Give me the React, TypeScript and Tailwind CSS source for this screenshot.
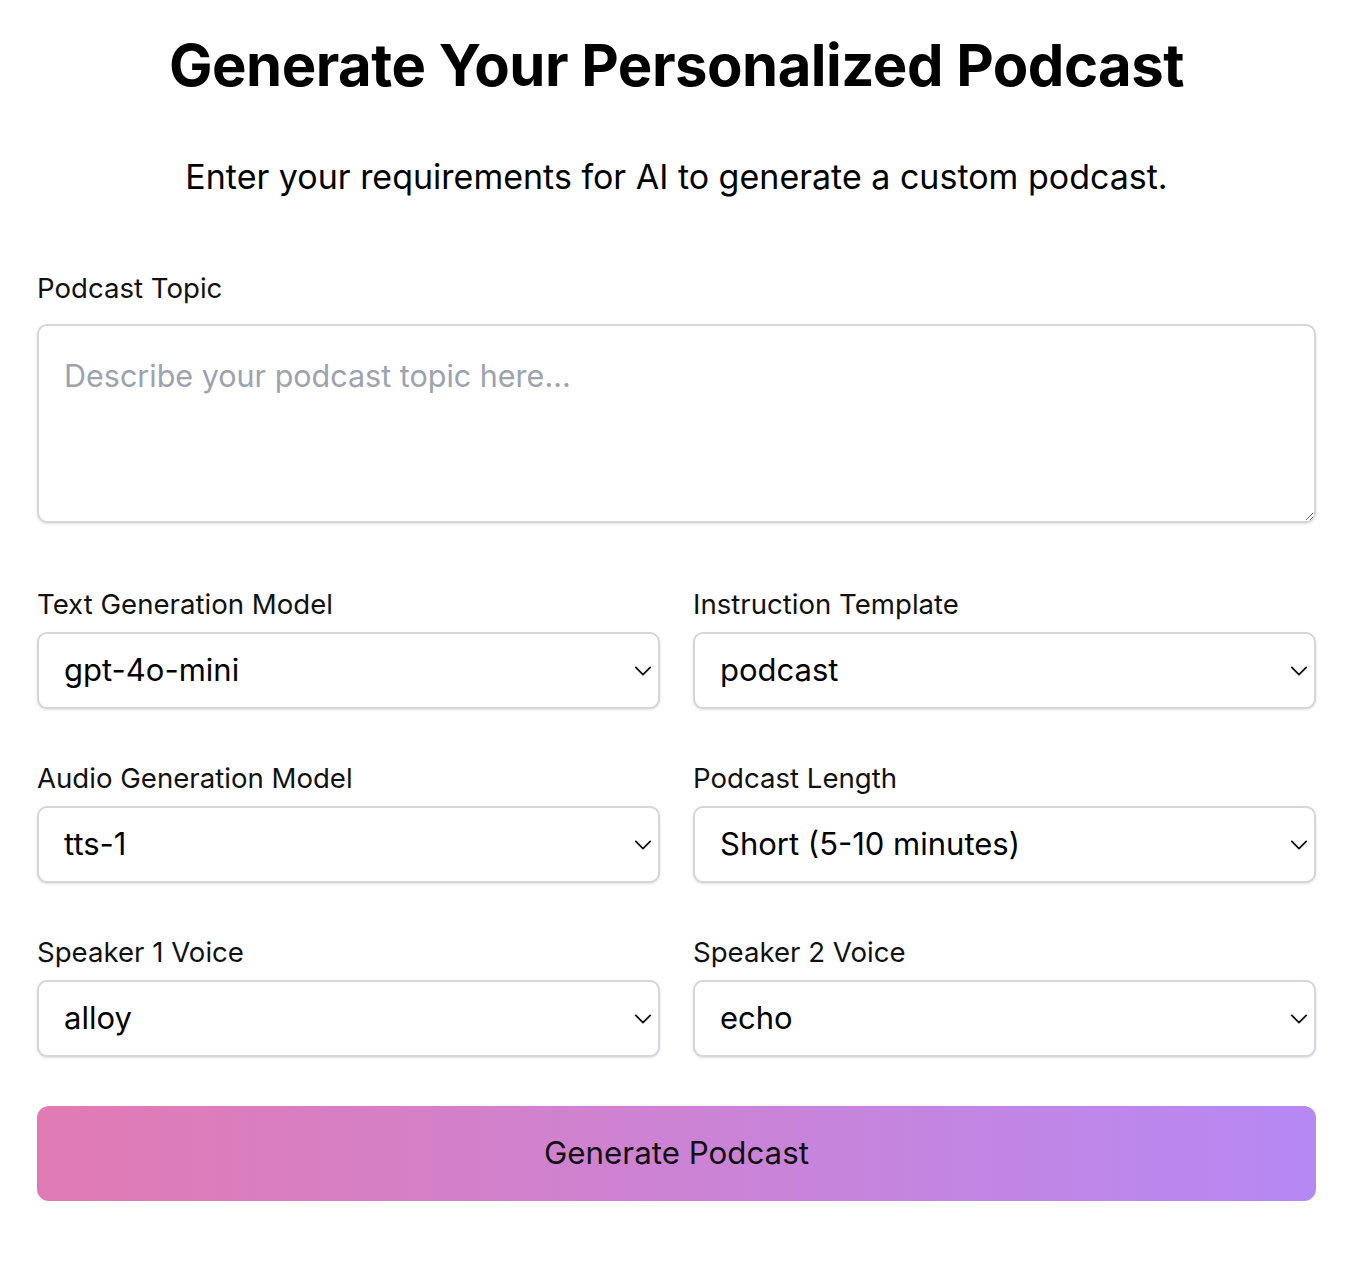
import React from "react";

const Chevron = () => (
  <svg
    className="pointer-events-none absolute right-[7px] top-1/2 -translate-y-1/2"
    width="20"
    height="12"
    viewBox="0 0 20 12"
    fill="none"
    stroke="#111"
    strokeWidth="2"
    strokeLinecap="round"
    strokeLinejoin="round"
  >
    <path d="M2 2l8 8 8-8" transform="translate(10 6) scale(0.9 0.9) translate(-10 -6)" />
  </svg>
);

interface FieldProps {
  label: string;
  value: string;
  options: string[];
}

const SelectField = ({ label, value, options }: FieldProps) => (
  <div className="flex flex-col">
    <label className="mb-[10px] text-[27.6px] leading-[36px] text-[#111]">{label}</label>
    <div className="relative">
      <select
        defaultValue={value}
        className="h-[77px] w-full appearance-none rounded-[10px] border-2 border-[#d4d6db] bg-white pl-[25px] pr-12 text-[31px] text-black shadow-sm outline-none"
      >
        {options.map((o) => (
          <option key={o}>{o}</option>
        ))}
      </select>
      <Chevron />
    </div>
  </div>
);

export default function App() {
  return (
    <div className="min-h-screen bg-white font-['Inter',sans-serif] text-black">
      <div className="pl-[37px] pr-[50px] pt-[29px]">
        <h1 className="text-center text-[58px] font-bold leading-[72px] tracking-[-0.5px]">
          Generate Your Personalized Podcast
        </h1>
        <p className="mt-[52px] text-center text-[34px] leading-[48px]">
          Enter your requirements for AI to generate a custom podcast.
        </p>

        <div className="mt-[69px] flex flex-col">
          <label className="mb-[18px] text-[27.6px] leading-[36px] text-[#111]">Podcast Topic</label>
          <textarea
            placeholder="Describe your podcast topic here..."
            className="h-[199px] w-full rounded-[10px] border-2 border-[#d4d6db] px-[25px] pt-[28px] pb-[16px] text-[30.5px] leading-[44px] shadow-sm outline-none placeholder:text-[#9ca3af]"
          />
        </div>

        <div className="mt-[63px] grid grid-cols-2 gap-x-[33px] gap-y-[51px]">
          <SelectField label="Text Generation Model" value="gpt-4o-mini" options={["gpt-4o-mini", "gpt-4o"]} />
          <SelectField label="Instruction Template" value="podcast" options={["podcast", "lecture"]} />
          <SelectField label="Audio Generation Model" value="tts-1" options={["tts-1", "tts-1-hd"]} />
          <SelectField
            label="Podcast Length"
            value="Short (5-10 minutes)"
            options={["Short (5-10 minutes)", "Medium (10-20 minutes)"]}
          />
          <SelectField label="Speaker 1 Voice" value="alloy" options={["alloy", "echo"]} />
          <SelectField label="Speaker 2 Voice" value="echo" options={["alloy", "echo"]} />
        </div>

        <button className="mt-[49px] h-[95px] w-full rounded-[12px] bg-gradient-to-r from-[#e17ab3] to-[#b688f4] text-[31.3px] text-[#111]">
          Generate Podcast
        </button>
      </div>
    </div>
  );
}
